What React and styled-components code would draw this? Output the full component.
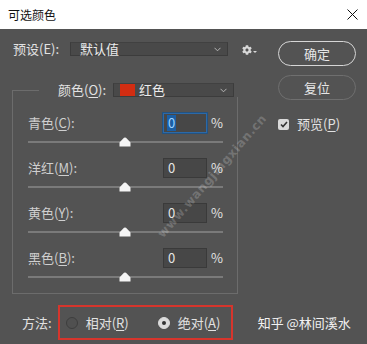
import styled, { createGlobalStyle } from "styled-components"
import { FaCog } from "react-icons/fa"

const GlobalStyle = createGlobalStyle`
  html, body { margin: 0; padding: 0; }
  body {
    font-family: "Noto Sans CJK SC", "Noto Sans", sans-serif;
    background: #535353;
  }
`

const Window = styled.div`
  width: 367px;
  height: 344px;
  display: flex;
  flex-direction: column;
  overflow: hidden;
`

const TitleBar = styled.div`
  height: 29px;
  background: #fff;
  display: flex;
  align-items: center;
  justify-content: space-between;
  padding: 0 9px 0 8px;
  font-size: 12px;
  color: #111;
`

const Body = styled.div`
  position: relative;
  flex: 1;
  background: #535353;
  color: #e2e2e2;
  font-size: 13px;
`

const Top = styled.div`
  display: grid;
  grid-template-columns: 278px 78px;
`

const LeftCol = styled.div`
  padding-top: 13px;
`

const PresetRow = styled.div`
  display: flex;
  align-items: center;
  height: 14px;
  padding-left: 13px;
`

const Label = styled.span`
  white-space: nowrap;
  line-height: 14px;
  color: ${(p) => p.$dim ? "#cfcfcf" : "#e2e2e2"};
  u { text-underline-offset: 2px; }
`

const Select = styled.div`
  box-sizing: border-box;
  width: ${(p) => p.$width}px;
  height: 14px;
  margin-left: ${(p) => p.$gap}px;
  background: #494949;
  border: 1px solid #3c3c3c;
  border-top-color: #414141;
  display: flex;
  align-items: center;
  padding: 0 6px 0 ${(p) => p.$pad}px;
  gap: 4px;
  font-size: 13px;
  color: #ececec;
  line-height: 12px;
`

const SelectText = styled.span`
  flex: 1;
  white-space: nowrap;
`

const Swatch = styled.span`
  width: 15px;
  height: 12px;
  background: #d22d12;
`

const Gear = styled.div`
  margin-left: 14px;
  display: flex;
  align-items: center;
  gap: 1px;
  color: #d8d8d8;
  padding-top: 1px;
`

const TinyArrow = styled.span`
  width: 0;
  height: 0;
  border-left: 2px solid transparent;
  border-right: 2px solid transparent;
  border-top: 2px solid #d8d8d8;
  margin-top: 5px;
`

const Group = styled.fieldset`
  box-sizing: border-box;
  width: 226px;
  margin: 27px 0 0 12px;
  padding: 16px 14px 0 15px;
  border: 1px solid #6c6c6c;
  min-width: 0;
`

const Legend = styled.legend`
  margin-left: 11px;
  padding: 0 8px 0 19px;
  display: flex;
  align-items: center;
  height: 14px;
`

const Channel = styled.div`
  display: flex;
  flex-direction: column;
  height: 45px;
`

const ValueLine = styled.div`
  display: grid;
  grid-template-columns: 1fr 44px auto;
  align-items: center;
  column-gap: 4px;
  height: 20px;
`

const NumBox = styled.div`
  box-sizing: border-box;
  height: 20px;
  background: #474747;
  border: 1px solid ${(p) => p.$focus ? "#2b69a8" : "#3a3a3a"};
  box-shadow: ${(p) => p.$focus ? "0 0 0 1px #24527f" : "none"};
  display: flex;
  align-items: center;
  padding-left: 3px;
  font-size: 13px;
`

const NumText = styled.span`
  padding: 0 1px;
  line-height: 16px;
  color: ${(p) => p.$sel ? "#9fd4ff" : "#e6e6e6"};
  background: ${(p) => p.$sel ? "#1b5fa5" : "transparent"};
`

const Track = styled.div`
  position: relative;
  margin-top: 8px;
  height: 2px;
  background: #7a7a7a;
`

const Thumb = styled.svg`
  position: absolute;
  top: -4px;
  left: 91px;
`

const RightCol = styled.div`
  padding-top: 12px;
  display: flex;
  flex-direction: column;
`

const PillButton = styled.div`
  box-sizing: border-box;
  height: 25px;
  border-radius: 13px;
  border: 1px solid ${(p) => p.$primary ? "#d6d6d6" : "#6f6f6f"};
  display: flex;
  align-items: center;
  justify-content: center;
  font-size: 13px;
  color: #e6e6e6;
  margin-bottom: 9px;
`

const CheckRow = styled.div`
  display: flex;
  align-items: center;
  gap: 8px;
  margin-top: 8px;
  height: 14px;
`

const CheckBox = styled.span`
  width: 11px;
  height: 11px;
  border-radius: 2px;
  background: #dadada;
  display: flex;
  align-items: center;
  justify-content: center;
`

const Bottom = styled.div`
  display: flex;
  align-items: center;
  margin-top: 11px;
  padding-left: 22px;
`

const MethodBox = styled.div`
  box-sizing: border-box;
  width: 175px;
  height: 35px;
  margin-left: 6px;
  border: 2px solid #d6352c;
  display: flex;
  align-items: center;
  padding-left: 6px;
`

const RadioItem = styled.div`
  display: flex;
  align-items: center;
  gap: 8px;
  margin-right: ${(p) => p.$gap || 0}px;
`

const Radio = styled.span`
  box-sizing: border-box;
  width: 12px;
  height: 12px;
  border-radius: 50%;
  border: 1px solid ${(p) => p.$on ? "#dcdcdc" : "#3e3e3e"};
  background: ${(p) => p.$on ? "#dcdcdc" : "#505050"};
  display: flex;
  align-items: center;
  justify-content: center;
  &::after {
    content: "";
    width: 4px;
    height: 4px;
    border-radius: 50%;
    background: ${(p) => p.$on ? "#333" : "transparent"};
  }
`

const Signature = styled.span`
  margin-left: 25px;
  font-size: 13px;
  color: #f2f2f2;
  white-space: nowrap;
`

const SiteMark = styled.div`
  position: absolute;
  left: 160px;
  top: 200px;
  transform: rotate(-49deg);
  transform-origin: left center;
  font-family: "DejaVu Sans", sans-serif;
  font-weight: bold;
  font-size: 12px;
  letter-spacing: 0.6px;
  color: rgba(255, 255, 255, 0.2);
  pointer-events: none;
  white-space: nowrap;
`

const Chevron = () => (
  <svg width="7" height="5" viewBox="0 0 7 5">
    <path d="M0.5 0.8 L3.5 3.8 L6.5 0.8" fill="none" stroke="#b5b5b5" strokeWidth="1" />
  </svg>
)

const channels = [
  { name: "青色", key: "C", focus: true },
  { name: "洋红", key: "M" },
  { name: "黄色", key: "Y" },
  { name: "黑色", key: "B" },
]

const App = () => {
  return (
    <Window>
      <GlobalStyle />
      <TitleBar>
        <span>可选颜色</span>
        <svg width="11" height="11" viewBox="0 0 11 11">
          <path d="M0.5 0.5 L10.5 10.5 M10.5 0.5 L0.5 10.5" stroke="#111" strokeWidth="1" />
        </svg>
      </TitleBar>
      <Body>
        <Top>
          <LeftCol>
            <PresetRow>
              <Label>预设(E):</Label>
              <Select $width={158} $gap={11} $pad={9}>
                <SelectText>默认值</SelectText>
                <Chevron />
              </Select>
              <Gear>
                <FaCog size={10} />
                <TinyArrow />
              </Gear>
            </PresetRow>
            <Group>
              <Legend>
                <Label>颜色(<u>O</u>):</Label>
                <Select $width={121} $gap={7} $pad={6}>
                  <Swatch />
                  <SelectText>红色</SelectText>
                  <Chevron />
                </Select>
              </Legend>
              {channels.map((c) => (
                <Channel key={c.key}>
                  <ValueLine>
                    <Label $dim>{c.name}(<u>{c.key}</u>):</Label>
                    <NumBox $focus={c.focus}>
                      <NumText $sel={c.focus}>0</NumText>
                    </NumBox>
                    <Label>%</Label>
                  </ValueLine>
                  <Track>
                    <Thumb width="12" height="10" viewBox="0 0 12 10">
                      <path d="M6 0.5 Q7 0.5 8 1.8 L11.5 5.5 L11.5 9.5 L0.5 9.5 L0.5 5.5 L4 1.8 Q5 0.5 6 0.5 Z" fill="#f4f4f4" />
                    </Thumb>
                  </Track>
                </Channel>
              ))}
            </Group>
          </LeftCol>
          <RightCol>
            <PillButton $primary>确定</PillButton>
            <PillButton>复位</PillButton>
            <CheckRow>
              <CheckBox>
                <svg width="8" height="7" viewBox="0 0 8 7">
                  <path d="M1 3.5 L3 5.5 L7 1" fill="none" stroke="#333" strokeWidth="1.6" />
                </svg>
              </CheckBox>
              <Label>预览(<u>P</u>)</Label>
            </CheckRow>
          </RightCol>
        </Top>
        <Bottom>
          <Label>方法:</Label>
          <MethodBox>
            <RadioItem $gap={29}>
              <Radio />
              <Label>相对(<u>R</u>)</Label>
            </RadioItem>
            <RadioItem>
              <Radio $on />
              <Label>绝对(<u>A</u>)</Label>
            </RadioItem>
          </MethodBox>
          <Signature>知乎 @林间溪水</Signature>
        </Bottom>
        <SiteMark>www.wangjingxian.cn</SiteMark>
      </Body>
    </Window>
  )
}

export default App
